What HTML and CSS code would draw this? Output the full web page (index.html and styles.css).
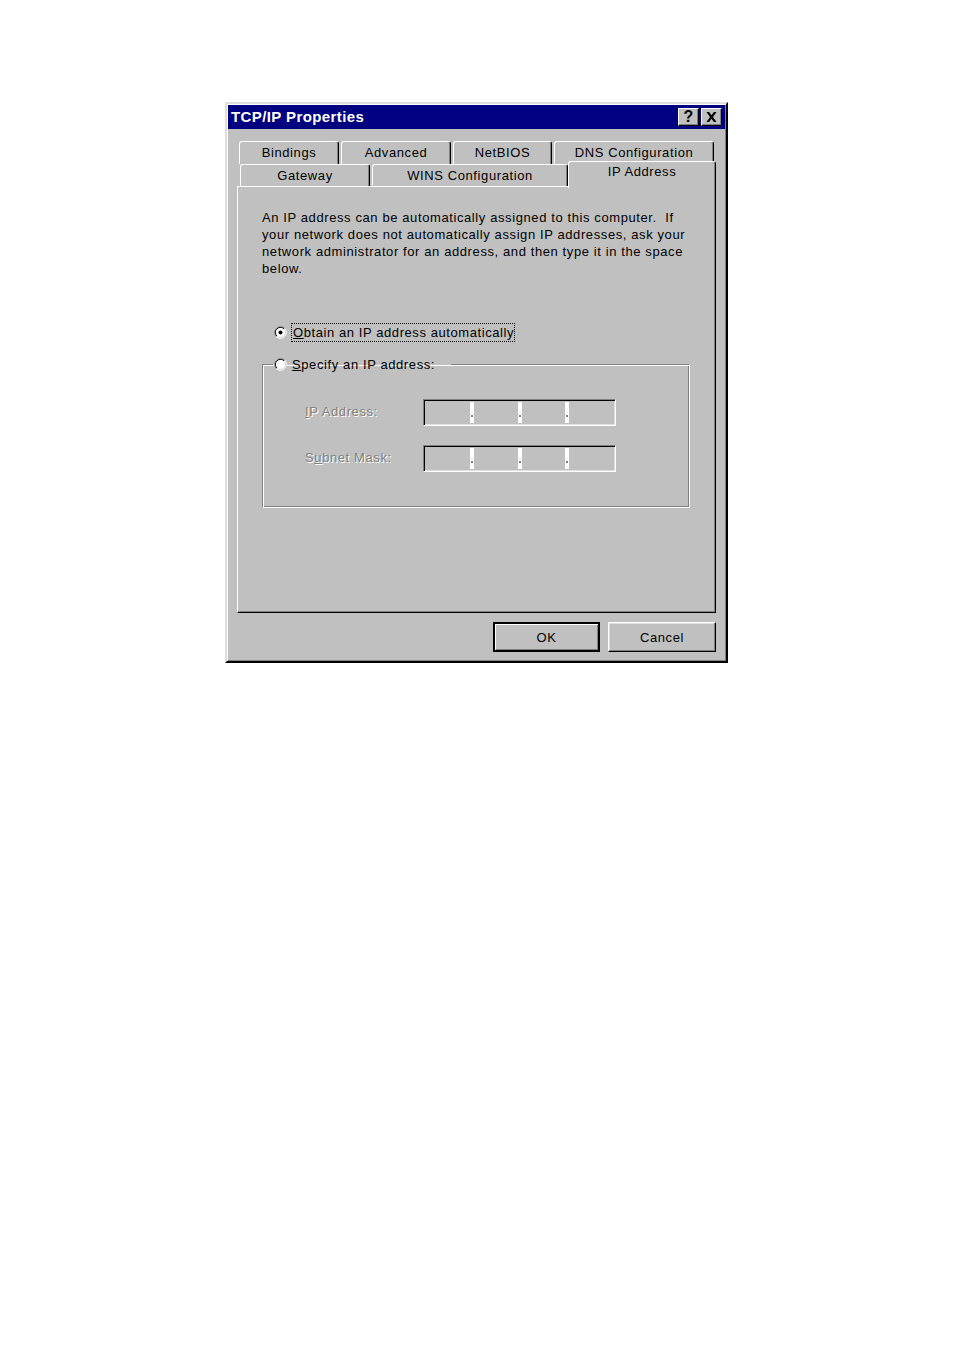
FILE: index.html
```html
<!DOCTYPE html>
<html>
<head>
<meta charset="utf-8">
<link rel="stylesheet" href="styles.css">
</head>
<body>
<div class="page">
  <div class="dialog">
    <div class="titlebar">
      <span class="title">TCP/IP Properties</span>
      <div class="tbtns">
        <span class="tbtn">?</span>
        <span class="tbtn">
          <svg width="11" height="10" viewBox="0 0 11 10"><path d="M0.5 0h2.6l2.4 3.2 2.4-3.2h2.6L7 5l3.5 5H7.9L5.5 6.8 3.1 10H0.5L4 5z" fill="#000"/></svg>
        </span>
      </div>
    </div>
    <div class="body">
      <div class="tabs">
        <div class="tabrow row1">
          <div class="tab w-bind">Bindings</div>
          <div class="tab w-adv">Advanced</div>
          <div class="tab w-net">NetBIOS</div>
          <div class="tab w-dns">DNS Configuration</div>
        </div>
        <div class="tabrow row2">
          <div class="tab w-gw">Gateway</div>
          <div class="tab w-wins">WINS Configuration</div>
          <div class="tab sel w-ip">IP Address</div>
        </div>
      </div>
      <div class="panel">
        <p class="intro">An IP address can be automatically assigned to this computer.&nbsp; If<br>your network does not automatically assign IP addresses, ask your<br>network administrator for an address, and then type it in the space<br>below.</p>
        <div class="radiorow">
          <svg class="radio" width="13" height="13" viewBox="0 0 13 13">
            <path d="M2.26 10.74A6 6 0 0 1 10.74 2.26" stroke="#808080" fill="none"/>
            <path d="M10.74 2.26A6 6 0 0 1 2.26 10.74" stroke="#fff" fill="none"/>
            <path d="M2.96 10.04A5 5 0 0 1 10.04 2.96" stroke="#000" fill="none"/>
            <path d="M10.04 2.96A5 5 0 0 1 2.96 10.04" stroke="#dfdfdf" fill="none"/>
            <circle cx="6.5" cy="6.5" r="4.5" fill="#fff"/>
            <circle cx="6.5" cy="6.5" r="2" fill="#000"/>
          </svg>
          <span class="focus"><u>O</u>btain an IP address automatically</span>
        </div>
        <fieldset class="group">
          <legend class="legend">
            <svg class="radio" width="13" height="13" viewBox="0 0 13 13">
              <path d="M2.26 10.74A6 6 0 0 1 10.74 2.26" stroke="#808080" fill="none"/>
              <path d="M10.74 2.26A6 6 0 0 1 2.26 10.74" stroke="#fff" fill="none"/>
              <path d="M2.96 10.04A5 5 0 0 1 10.04 2.96" stroke="#000" fill="none"/>
              <path d="M10.04 2.96A5 5 0 0 1 2.96 10.04" stroke="#dfdfdf" fill="none"/>
              <circle cx="6.5" cy="6.5" r="4.5" fill="#fff"/>
            </svg>
            <span class="lbl"><u>S</u>pecify an IP address:</span>
          </legend>
          <div class="fieldrow">
            <span class="dis"><u>I</u>P Address:</span>
            <div class="ipbox">
              <span class="seg"></span><span class="sep"><i></i></span>
              <span class="seg"></span><span class="sep"><i></i></span>
              <span class="seg"></span><span class="sep"><i></i></span>
              <span class="seg"></span>
            </div>
          </div>
          <div class="fieldrow">
            <span class="dis">S<u>u</u>bnet Mask:</span>
            <div class="ipbox">
              <span class="seg"></span><span class="sep"><i></i></span>
              <span class="seg"></span><span class="sep"><i></i></span>
              <span class="seg"></span><span class="sep"><i></i></span>
              <span class="seg"></span>
            </div>
          </div>
        </fieldset>
      </div>
      <div class="buttons">
        <div class="btn def"><span>OK</span></div>
        <div class="btn cancel"><span>Cancel</span></div>
      </div>
    </div>
  </div>
</div>
</body>
</html>
```
FILE: styles.css
```css
html, body {
  margin: 0;
  padding: 0;
  background: #fff;
}
body {
  font-family: "Liberation Sans", Arial, sans-serif;
  font-size: 13px;
  letter-spacing: 0.6px;
  color: #000;
}
.page {
  padding: 102px 0 0 225px;
}
.dialog {
  box-sizing: border-box;
  width: 503px;
  height: 561px;
  background: #c0c0c0;
  border: 2px solid;
  border-color: #dfdfdf #000 #000 #dfdfdf;
  box-shadow: inset 1px 1px 0 #fff, inset -1px -1px 0 #808080;
  padding: 1px;
}
.titlebar {
  height: 24px;
  background: #000080;
  display: flex;
  align-items: center;
  justify-content: space-between;
  padding-left: 3px;
}
.title {
  color: #fff;
  font-weight: bold;
  font-size: 15px;
  letter-spacing: 0.4px;
  padding-bottom: 1px;
}
.tbtns {
  display: flex;
  gap: 2px;
  margin-right: 3px;
}
.tbtn {
  box-sizing: border-box;
  width: 21px;
  height: 18px;
  background: #c0c0c0;
  border: 1px solid;
  border-color: #fff #000 #000 #fff;
  box-shadow: inset -1px -1px 0 #808080;
  display: flex;
  align-items: center;
  justify-content: center;
  font-weight: bold;
  font-size: 16px;
  letter-spacing: 0;
  line-height: 1;
}
.body {
  padding: 12px 9px 0 9px;
}
.tabs {
  height: 45px;
  display: flex;
  flex-direction: column;
}
.tabrow {
  display: flex;
  gap: 2px;
}
.row1 {
  height: 23px;
  padding-left: 2px;
}
.row2 {
  height: 22px;
  padding-left: 3px;
}
.tab {
  box-sizing: border-box;
  height: 100%;
  border-top: 1px solid #fff;
  border-left: 1px solid #fff;
  border-right: 1px solid #000;
  border-radius: 3px 3px 0 0;
  box-shadow: inset -1px 0 0 #808080;
  background: #c0c0c0;
  text-align: center;
  line-height: 21px;
}
.row1 .tab {
  height: 23px;
}
.w-bind { width: 100px; }
.w-adv { width: 110px; }
.w-net { width: 99px; }
.w-dns { width: 160px; }
.w-gw { width: 130px; }
.w-wins { width: 196px; }
.w-ip {
  width: 148px;
}
.tab.sel {
  height: 27px;
  margin-top: -3px;
  margin-left: -2px;
  position: relative;
  z-index: 1;
  line-height: 20px;
}
.panel {
  box-sizing: border-box;
  width: 479px;
  height: 427px;
  border: 1px solid;
  border-color: #fff #000 #000 #fff;
  box-shadow: inset -1px -1px 0 #808080;
  padding: 0 0 0 24px;
}
.intro {
  margin: 22px 0 0 0;
  line-height: 17px;
  letter-spacing: 0.6px;
}
.radiorow {
  margin: 46px 0 0 12px;
  height: 19px;
  display: flex;
  align-items: center;
}
.radio {
  display: block;
  flex: none;
}
.focus {
  margin-left: 4px;
  border: 1px dotted #000;
  padding: 0 0 0 1px;
  line-height: 17px;
  letter-spacing: 0.58px;
}
.group {
  box-sizing: border-box;
  width: 428px;
  height: 153px;
  margin: 13px 0 0 0;
  padding: 0;
  border: 1px solid;
  border-color: #808080 #fff #fff #808080;
  box-shadow: 1px 1px 0 #fff inset, -1px -1px 0 #808080 inset;
}
.legend {
  margin-left: 10px;
  padding: 0 16px 0 1px;
  display: flex;
  align-items: center;
  height: 19px;
}
.lbl {
  margin-left: 5px;
}
.fieldrow {
  display: flex;
  align-items: center;
  margin-left: 42px;
  height: 27px;
  margin-top: 19px;
}
.fieldrow:first-of-type {
  margin-top: 25px;
}
.dis {
  width: 118px;
  color: #808080;
  text-shadow: 1px 1px 0 #fff;
  padding-bottom: 2px;
}
.ipbox {
  box-sizing: border-box;
  width: 193px;
  height: 27px;
  border: 1px solid;
  border-color: #808080 #fff #fff #808080;
  box-shadow: inset 1px 1px 0 #000, inset -1px -1px 0 #dfdfdf;
  padding: 2px;
  display: flex;
}
.seg {
  flex: 1;
}
.sep {
  width: 4px;
  background: #fff;
  display: flex;
  align-items: flex-end;
  justify-content: center;
  padding-bottom: 6px;
}
.sep i {
  width: 2px;
  height: 2px;
  background: #808080;
}
.buttons {
  display: flex;
  justify-content: flex-end;
  gap: 8px;
  margin-top: 9px;
}
.btn {
  box-sizing: border-box;
  height: 30px;
  display: flex;
  align-items: center;
  justify-content: center;
  background: #c0c0c0;
  border: 1px solid;
  border-color: #fff #000 #000 #fff;
  box-shadow: inset -1px -1px 0 #808080, inset 1px 1px 0 #dfdfdf;
}
.btn.def {
  width: 107px;
  border: 2px solid;
  border-color: #000;
  box-shadow: inset 1px 1px 0 #fff, inset -1px -1px 0 #808080;
}
.btn.cancel {
  width: 108px;
}
```
